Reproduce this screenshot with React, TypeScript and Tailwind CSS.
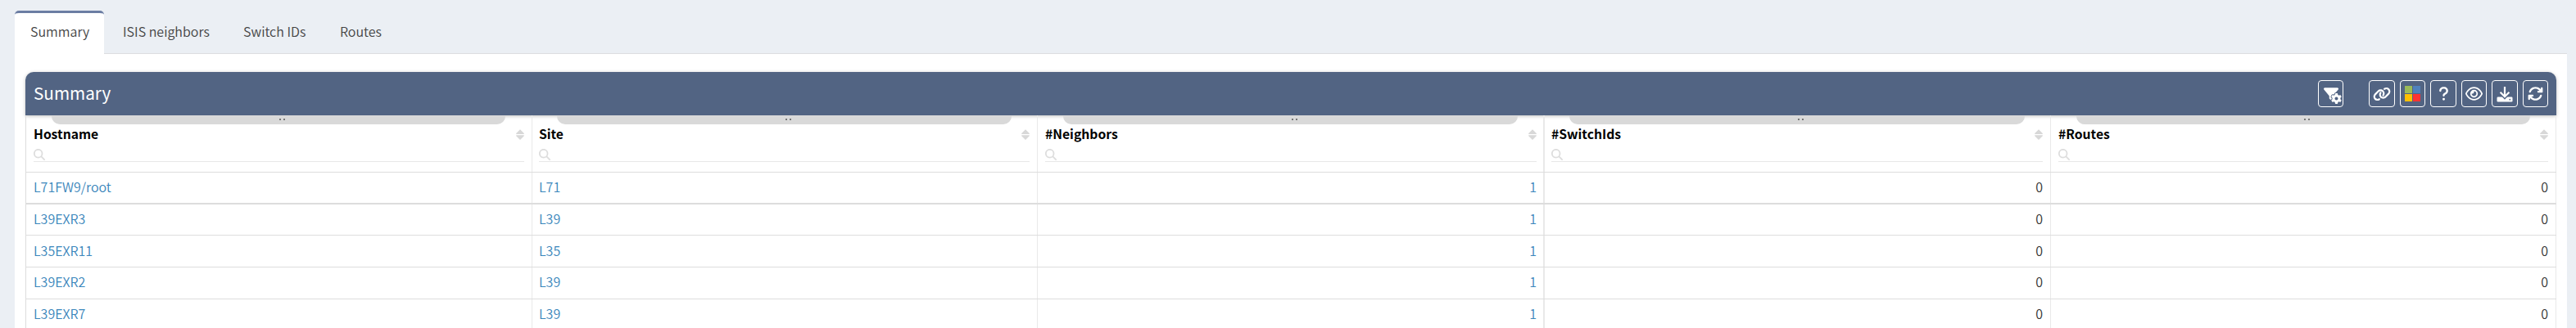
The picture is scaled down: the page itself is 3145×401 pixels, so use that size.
import type { ReactNode } from 'react';
import { FaArrowsRotate, FaFilter, FaGear, FaLink, FaMagnifyingGlass, FaQuestion, FaRegEye } from 'react-icons/fa6';

const tabs = [
  { label: 'Summary', cls: 'h-[53px] w-[109px] border-t-[3px] border-[#6b7da3] rounded-t-[5px] bg-white pl-[19px] pt-[9px]' },
  { label: 'ISIS neighbors', cls: 'h-[52px] w-[147px] pl-[23px] pt-[12px]' },
  { label: 'Switch IDs', cls: 'h-[52px] w-[118px] pl-[23px] pt-[12px]' },
  { label: 'Routes', cls: 'h-[52px] w-[100px] pl-[23px] pt-[12px]' },
];

const cols = [
  { name: 'Hostname', cell: 'border-r pl-[9px] pr-[9px]', handle: 'ml-[22px] mr-[23px]' },
  { name: 'Site', cell: 'border-r pl-[8px] pr-[9px]', handle: 'ml-[22px] mr-[22px]' },
  { name: '#Neighbors', cell: 'border-r-2 pl-[9px] pr-[8px]', handle: 'ml-[22px] mr-[23px]' },
  { name: '#SwitchIds', cell: 'border-r pl-[8px] pr-[9px]', handle: 'ml-[22px] mr-[22px]' },
  { name: '#Routes', cell: 'border-r pl-[9px] pr-[9px]', handle: 'ml-[22px] mr-[22px]' },
];

const rows = [
  { cells: ['L71FW9/root', 'L71', '1', '0', '0'], cls: 'h-[39px] border-b-2', pad: 'pt-[4px]' },
  { cells: ['L39EXR3', 'L39', '1', '0', '0'], cls: 'h-[38px] border-b', pad: 'pt-[4px]' },
  { cells: ['L35EXR11', 'L35', '1', '0', '0'], cls: 'h-[39px] border-b', pad: 'pt-[5px]' },
  { cells: ['L39EXR2', 'L39', '1', '0', '0'], cls: 'h-[39px] border-b', pad: 'pt-[4px]' },
  { cells: ['L39EXR7', 'L39', '1', '0', '0'], cls: 'h-[39px] border-b', pad: 'pt-[4px]' },
];

const grid = 'grid grid-cols-[618px_617px_619px_618px_617px]';

function Sort() {
  return (
    <svg width="10" height="14" viewBox="0 0 10 14" className="mt-[6px] shrink-0" fill="#d8d8d8">
      <path d="M5 0.3 9.8 5V6H0.2V5ZM5 12.9 9.8 8.2V7.2H0.2V8.2Z" />
    </svg>
  );
}

function DownloadIcon() {
  return (
    <svg width="20" height="20" viewBox="0 0 20 20" fill="none">
      <path d="M1.8 13.5H18.2Q19.5 13.5 19.5 14.8V18.2Q19.5 19.5 18.2 19.5H1.8Q0.5 19.5 0.5 18.2V14.8Q0.5 13.5 1.8 13.5Z" fill="white" />
      <path d="M5.4 9.2l4.6 4.6L14.6 9.2" stroke="#526483" strokeWidth="4" />
      <path d="M10 1V13M4.6 7.8l5.4 5.4 5.4-5.4" stroke="white" strokeWidth="2.2" />
      <circle cx="16.3" cy="16.7" r="0.9" fill="#526483" />
    </svg>
  );
}

function Button({ wide, children }: { wide?: boolean; children: ReactNode }) {
  return (
    <button className={`flex h-[33px] items-center justify-center rounded-[4px] border border-white text-white ${wide ? 'w-[32px]' : 'w-[31px]'}`}>
      {children}
    </button>
  );
}

export default function App() {
  return (
    <div className="h-[401px] w-[3145px] overflow-hidden bg-[#ebeff4] pl-[18px] pr-[11px] pt-[13px] font-['Noto_Sans_CJK_SC',sans-serif] text-[16px] font-[350] leading-[26px] text-[#444]">
      <nav className="flex h-[52px]">
        {tabs.map((t) => (
          <div key={t.label} className={`relative shrink-0 whitespace-nowrap ${t.cls}`}>{t.label}</div>
        ))}
      </nav>
      <main className="h-[336px] border-t border-[#dcdde0] bg-white pl-[13px] pr-[13px] pt-[22px]">
        <header className="flex h-[53px] items-center justify-between rounded-t-[10px] bg-[#526483] pl-[10px] pr-[10px] shadow-[0_1px_4px_rgba(0,0,0,0.25)]">
          <h1 className="pb-[3px] text-[20.7px] font-normal text-white">Summary</h1>
          <div className="flex gap-[6px]">
            <div className="mr-[25px]">
              <Button>
                <span className="grid h-[21px] w-[22px] shrink-0 translate-x-[2px] translate-y-[2px] *:col-start-1 *:row-start-1">
                  <FaFilter size={18} />
                  <FaGear size={13} className="self-end justify-self-end overflow-visible [paint-order:stroke]" stroke="#526483" strokeWidth={70} />
                </span>
              </Button>
            </div>
            <Button wide><FaLink size={22} className="shrink-0" /></Button>
            <Button>
              <span className="grid grid-cols-2 gap-px">
                <i className="h-[9px] w-[9px] bg-[#9bbb59]" />
                <i className="h-[9px] w-[9px] bg-[#4f81bd]" />
                <i className="h-[9px] w-[9px] bg-[#ffc000]" />
                <i className="h-[9px] w-[9px] bg-[#ff3333]" />
              </span>
            </Button>
            <Button wide><FaQuestion size={19} /></Button>
            <Button><FaRegEye size={21} className="shrink-0" /></Button>
            <Button wide><DownloadIcon /></Button>
            <Button><FaArrowsRotate size={19} /></Button>
          </div>
        </header>
        <section className="border-l border-[#ddd]">
          <div className={`${grid} h-[69px]`}>
            {cols.map((c) => (
              <div key={c.name} className={`border-[#e9e9e9] ${c.cell} flex h-[69px] flex-col`}>
                <div className={`flex h-[11px] shrink-0 justify-center gap-[3px] rounded-b-[10px] bg-[#d9d9d9] pl-[9px] pt-[4px] ${c.handle}`}>
                  <i className="h-[2px] w-[2px] bg-[#777]" />
                  <i className="h-[2px] w-[2px] bg-[#777]" />
                </div>
                <div className="flex h-[30px] justify-between text-[15.7px] font-bold leading-[23px] text-black">
                  <span>{c.name}</span>
                  <Sort />
                </div>
                <div className="h-[16px] border-b border-[#e8e8e8]">
                  <FaMagnifyingGlass size={14} className="text-[#ddd]" />
                </div>
              </div>
            ))}
          </div>
          <div className="h-px bg-[#ddd]" />
          {rows.map((r) => (
            <div key={r.cells[0]} className={`${grid} border-[#ddd] ${r.cls}`}>
              {r.cells.map((v, i) => (
                <div key={i} className={`border-[#e9e9e9] ${cols[i].cell} ${r.pad} ${i > 1 ? 'text-right' : ''} ${i < 3 ? 'text-[#3a86bb]' : 'text-[#333]'}`}>{v}</div>
              ))}
            </div>
          ))}
        </section>
      </main>
    </div>
  );
}
